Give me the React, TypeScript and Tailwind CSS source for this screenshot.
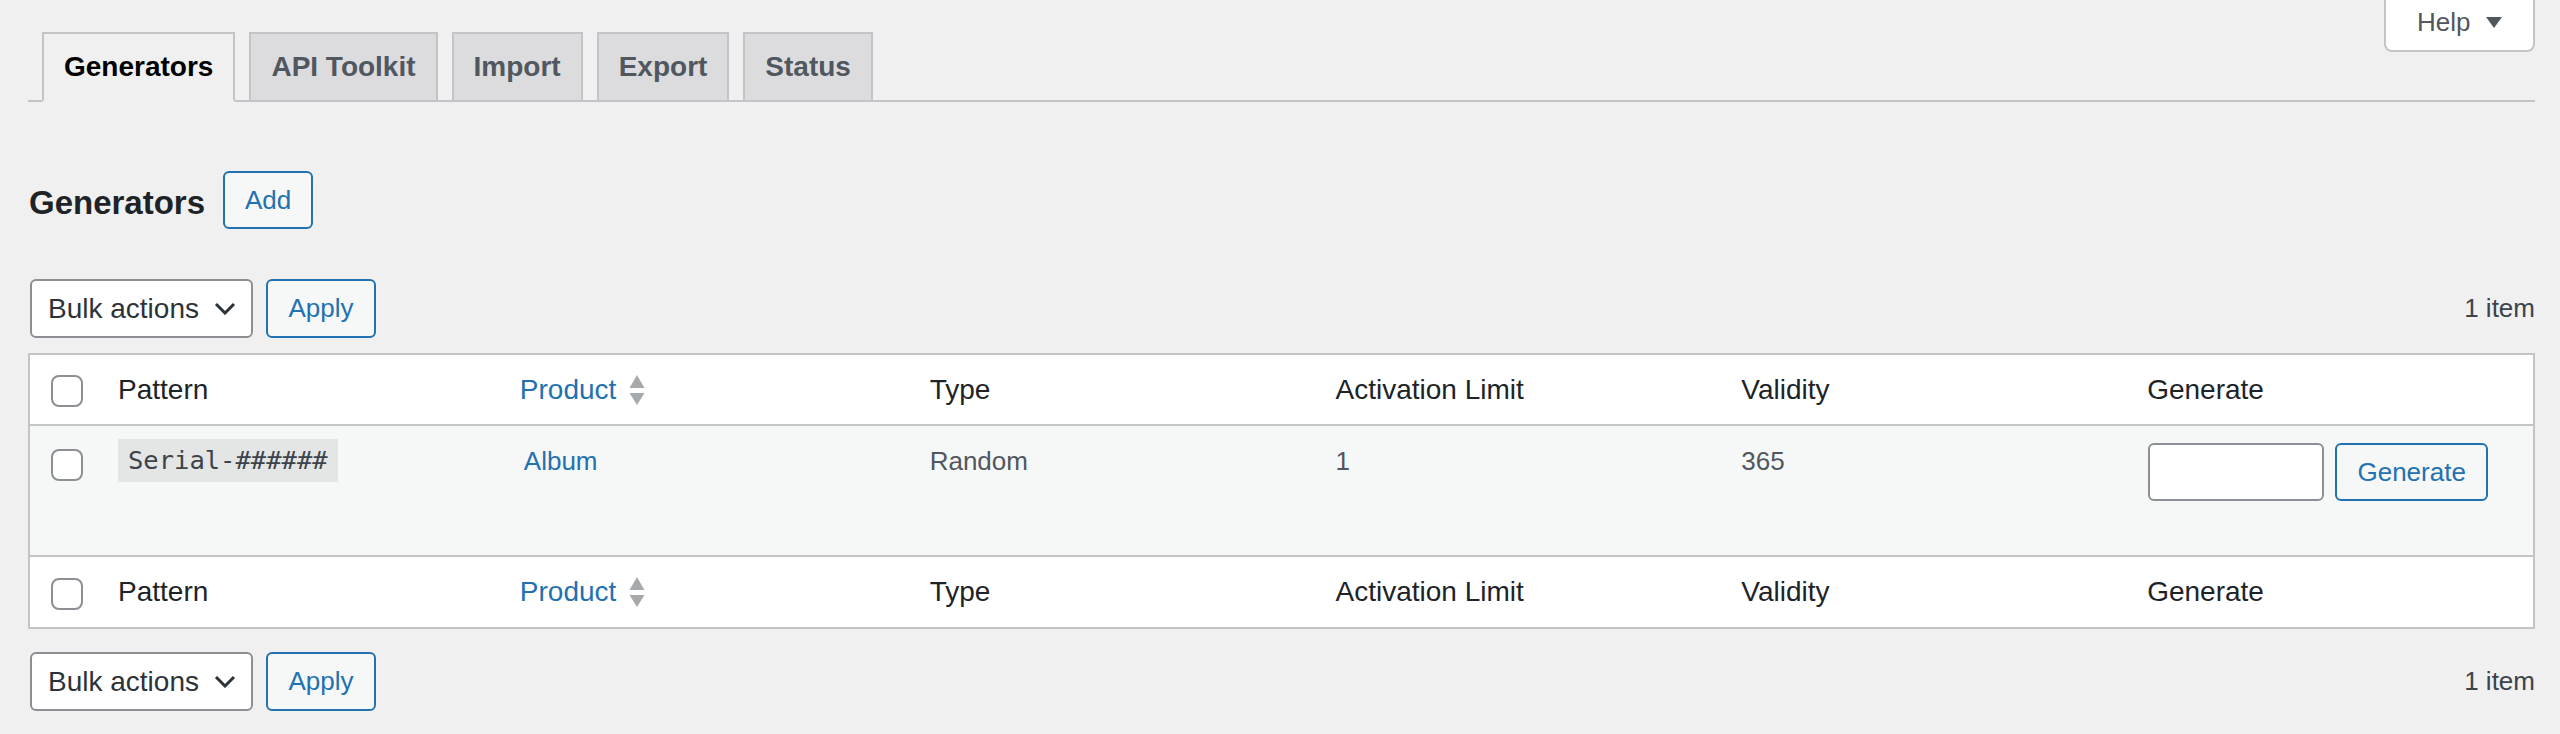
import { type ReactNode } from 'react';

const tabs = ['Generators', 'API Toolkit', 'Import', 'Export', 'Status'];

function Checkbox() {
  return <span className="block h-[32px] w-[32px] rounded-[8px] border-2 border-[#8c8f94] bg-white" />;
}

function SortIcon() {
  return (
    <svg width="16" height="30" viewBox="0 0 16 30" className="ml-[13px]">
      <path d="M0.5 13 L8 0 L15.5 13 Z" fill="#a7aaad" />
      <path d="M0.5 18 L8 30 L15.5 18 Z" fill="#a7aaad" />
    </svg>
  );
}

function OutlineButton({ children, className = '' }: { children: ReactNode; className?: string }) {
  return (
    <button
      className={`flex h-[58px] items-center justify-center rounded-[6px] border-2 border-[#2271b1] bg-[#f6f7f7] px-[20px] text-[26px] text-[#2271b1] ${className}`}
    >
      {children}
    </button>
  );
}

function TableNav() {
  return (
    <div className="flex h-[59px] items-center justify-between">
      <div className="ml-[2px] flex items-center gap-[13px]">
        <div className="flex h-[59px] w-[223px] items-center justify-between rounded-[6px] border-2 border-[#8c8f94] bg-white pl-[16px] pr-[15px] text-[28px] text-[#2c3338]">
          <span>Bulk actions</span>
          <svg width="22" height="13" viewBox="0 0 22 13">
            <path d="M2 2 L11 11 L20 2" fill="none" stroke="#2c3338" strokeWidth="3" />
          </svg>
        </div>
        <OutlineButton className="h-[59px] w-[110px]">Apply</OutlineButton>
      </div>
      <span className="text-[26px] text-[#3c434a]">1 item</span>
    </div>
  );
}

const cols = 'grid grid-cols-[68px_repeat(6,1fr)]';

// header and footer rows share the same cells
function HeadRow({ className }: { className: string }) {
  return (
    <div className={`${cols} items-center text-[28px] text-[#1d2327] ${className}`}>
      <div className="pl-[21px] pt-[3px]">
        <Checkbox />
      </div>
      <div className="pl-[20px]">Pattern</div>
      <div className="flex items-center pl-[16px] text-[#2271b1]">
        Product
        <SortIcon />
      </div>
      <div className="pl-[20px]">Type</div>
      <div className="pl-[20px]">Activation Limit</div>
      <div className="pl-[20px]">Validity</div>
      <div className="pl-[20px]">Generate</div>
    </div>
  );
}

export default function App() {
  return (
    <div className="min-h-[734px] bg-[#f0f0f1] pl-[28px] pr-[25px] font-['Liberation_Sans',Arial,sans-serif]">
      <div className="flex justify-end">
        <button className="flex h-[52px] w-[151px] items-center justify-between rounded-b-[8px] border-2 border-t-0 border-[#c3c4c7] bg-white pb-[6px] pl-[31px] pr-[31px] text-[26px] text-[#50575e]">
          <span>Help</span>
          <svg width="16" height="11" viewBox="0 0 16 11">
            <path d="M0 0 L16 0 L8 11 Z" fill="#50575e" />
          </svg>
        </button>
      </div>

      <nav className="mt-[-20px] flex items-end gap-[14px] border-b-2 border-[#c3c4c7] pl-[14px]">
        {tabs.map((t, i) => (
          <div
            key={t}
            className={`-mb-[2px] flex h-[70px] items-center border-2 border-[#c3c4c7] px-[20px] text-[28px] font-bold ${
              i === 0 ? 'border-b-[#f0f0f1] bg-[#f0f0f1] text-black' : 'bg-[#dcdcde] text-[#50575e]'
            }`}
          >
            {t}
          </div>
        ))}
      </nav>

      <div className="mt-[69px] flex h-[58px] items-center gap-[18px]">
        <h2 className="ml-[1px] pt-[5px] text-[33px] font-bold text-[#1d2327]">Generators</h2>
        <OutlineButton className="w-[90px]">Add</OutlineButton>
      </div>

      <div className="mt-[50px]">
        <TableNav />
      </div>

      <div className="mt-[15px] border-2 border-[#c3c4c7] bg-white">
        <HeadRow className="h-[71px] border-b-2 border-[#c3c4c7]" />
        <div className={`${cols} h-[131px] items-start border-b-2 border-[#c3c4c7] bg-[#f6f7f7] text-[26px] leading-[39px] text-[#50575e]`}>
          <div className="pl-[21px] pt-[23px]">
            <Checkbox />
          </div>
          <div className="pl-[20px] pt-[13px]">
            <code className="inline-block bg-black/[0.07] px-[10px] py-[6px] font-['DejaVu_Sans_Mono',monospace] text-[25.5px] leading-[31px] text-[#3c434a]">
              Serial-######
            </code>
          </div>
          <div className="pl-[20px] pt-[16px] text-[#2271b1]">Album</div>
          <div className="pl-[20px] pt-[16px]">Random</div>
          <div className="pl-[20px] pt-[16px]">1</div>
          <div className="pl-[20px] pt-[16px]">365</div>
          <div className="flex gap-[11px] pl-[21px] pt-[17px]">
            <input className="h-[58px] w-[176px] rounded-[6px] border-2 border-[#8c8f94] bg-white" />
            <OutlineButton className="w-[153px]">Generate</OutlineButton>
          </div>
        </div>
        <HeadRow className="h-[70px]" />
      </div>

      <div className="mt-[23px]">
        <TableNav />
      </div>
    </div>
  );
}
